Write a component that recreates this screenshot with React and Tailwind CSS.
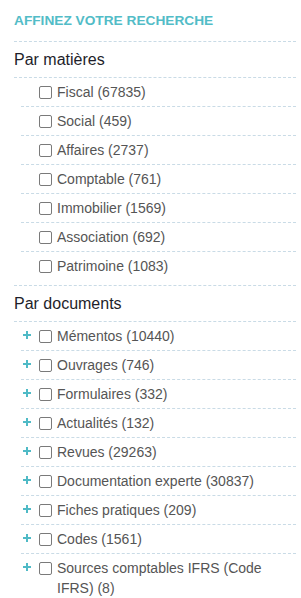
import React from 'react';

const matieres = [
  'Fiscal (67835)',
  'Social (459)',
  'Affaires (2737)',
  'Comptable (761)',
  'Immobilier (1569)',
  'Association (692)',
  'Patrimoine (1083)',
];

const documents = [
  'Mémentos (10440)',
  'Ouvrages (746)',
  'Formulaires (332)',
  'Actualités (132)',
  'Revues (29263)',
  'Documentation experte (30837)',
  'Fiches pratiques (209)',
  'Codes (1561)',
  'Sources comptables IFRS (Code IFRS) (8)',
];

const Plus = () => (
  <svg width="8" height="8" viewBox="0 0 8 8" className="shrink-0 mb-[2px]">
    <rect x="3" y="0" width="2" height="8" fill="#4fbac6" />
    <rect x="0" y="3" width="8" height="2" fill="#4fbac6" />
  </svg>
);

const Checkbox = () => (
  <span className="block w-[13px] h-[13px] shrink-0 border border-[#7a7a7a] rounded-[2px] bg-white" />
);

const Item = ({ label, expandable, last }) => (
  <li
    className={`flex items-start py-[4px] leading-[20px] ${
      last ? '' : 'border-b border-dashed border-[#c9dbe6]'
    }`}
  >
    <span className="w-[18px] h-[20px] flex items-center pl-[2px] shrink-0">
      {expandable && <Plus />}
    </span>
    <span className="h-[20px] flex items-center shrink-0">
      <Checkbox />
    </span>
    <span className="pl-[5px] text-[14px] text-[#555]">{label}</span>
  </li>
);

const Section = ({ title, items, expandable }) => (
  <div className="border-t border-dashed border-[#c9dbe6]">
    <h3 className="h-[36px] flex items-center text-[16px] text-[#1e1e2a] border-b border-dashed border-[#c9dbe6]">
      {title}
    </h3>
    <ul className="ml-[7px] pb-[5px]">
      {items.map((label, i) => (
        <Item key={label} label={label} expandable={expandable} last={i === items.length - 1} />
      ))}
    </ul>
  </div>
);

export default function App() {
  return (
    <div
      className="w-[301px] h-[598px] overflow-hidden bg-white pl-[14px] pr-[5px]"
      style={{ fontFamily: '"Liberation Sans", Arial, sans-serif' }}
    >
      <h2 className="pt-[12px] pb-[12px] leading-[17px] text-[13.7px] font-bold text-[#52bcc7] uppercase">
        Affinez votre recherche
      </h2>
      <Section title="Par matières" items={matieres} />
      <Section title="Par documents" items={documents} expandable />
    </div>
  );
}
